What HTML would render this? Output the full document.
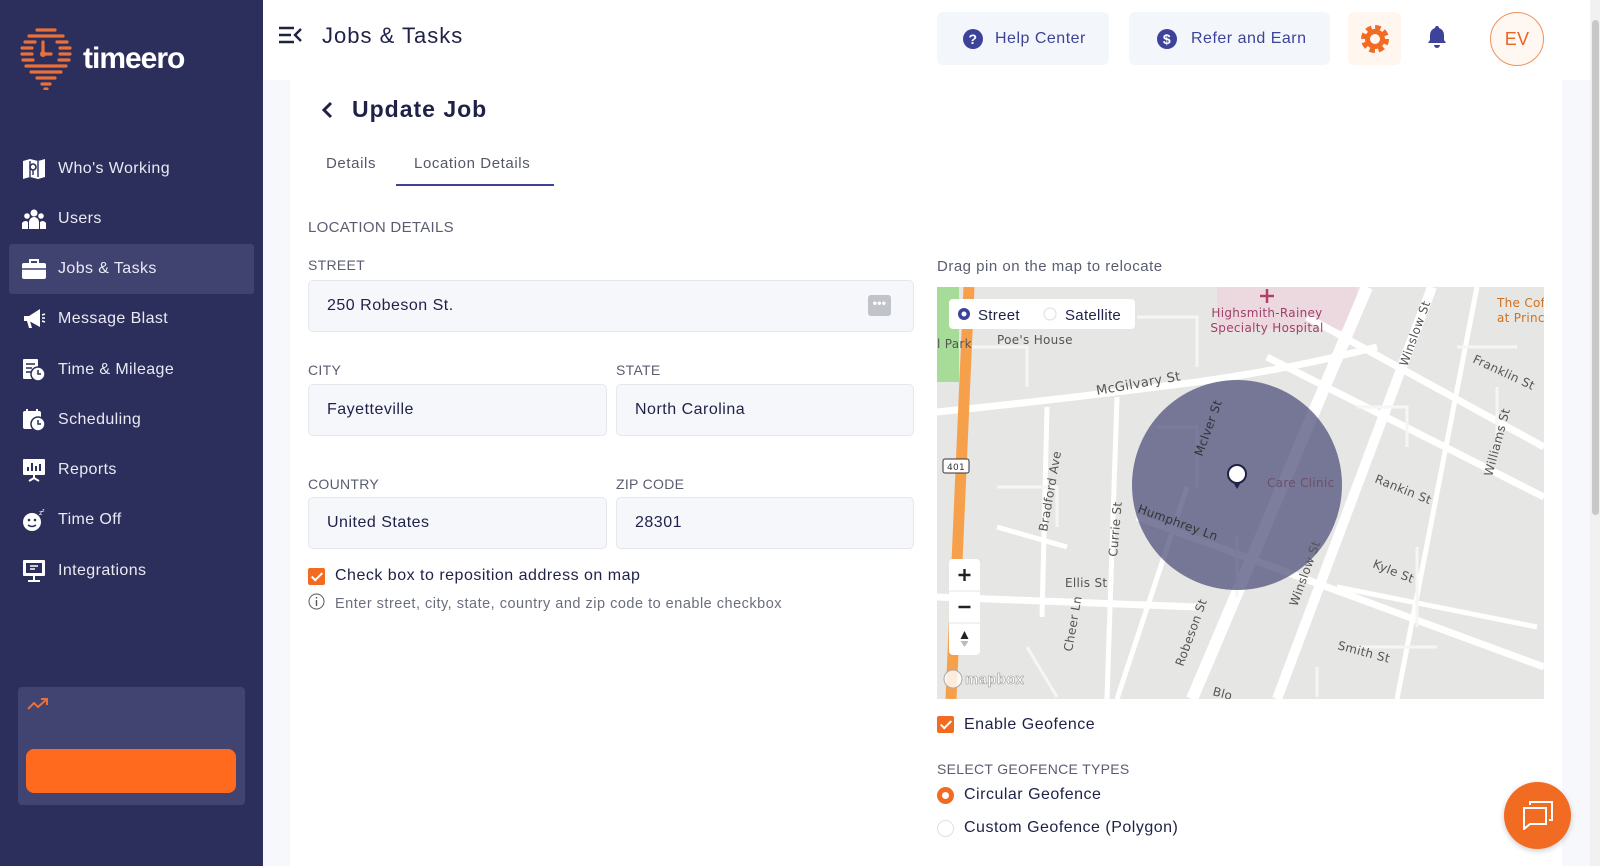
<!DOCTYPE html>
<html><head><meta charset="utf-8"><style>
*{box-sizing:border-box;margin:0;padding:0}
body{width:1600px;height:866px;overflow:hidden;background:#f7f8fb;font-family:"Liberation Sans",sans-serif;color:#1f2147;position:relative;letter-spacing:.3px}
.abs{position:absolute}
.sb{left:0;top:0;width:263px;height:866px;background:#2c2e5b}
.nav{position:absolute;left:9px;width:245px;height:50px;display:flex;align-items:center;color:#e9eaf3;font-size:16px;letter-spacing:.4px}
.nav svg{position:absolute;left:13px}
.nav span{position:absolute;left:49px}
.nav.act{background:#40426f;border-radius:3px}
.card{left:290px;top:80px;width:1272px;height:786px;background:#fff}
.hdr{left:263px;top:0;width:1327px;height:80px;background:#fff}
.lbl{font-size:14px;color:#5a5d70;letter-spacing:.3px}
.inp{position:absolute;height:52px;background:#f5f7fb;border:1px solid #e4e7ee;border-radius:5px;font-size:16px;color:#1f2147;padding-left:18px;display:flex;align-items:center;letter-spacing:.5px}
.btn{position:absolute;background:#f3f6fa;border-radius:6px;display:flex;align-items:center;font-size:16px;color:#3d4399;letter-spacing:.5px}
.cb{position:absolute;width:17px;height:17px;background:#f26b23;border-radius:2px}
.cb:after{content:"";position:absolute;left:6px;top:2px;width:4px;height:9px;border:solid #fff;border-width:0 2px 2px 0;transform:rotate(45deg)}
</style></head><body>
<div class="abs sb"></div>
<svg class="abs" style="left:19px;top:28px" width="54" height="62" viewBox="0 0 54 62">
<g stroke="#e8703a" stroke-width="3.2" stroke-linecap="round">
<line x1="18" y1="2" x2="36" y2="2"/><line x1="10" y1="8" x2="44" y2="8"/><line x1="6" y1="14" x2="16" y2="14"/><line x1="38" y1="14" x2="48" y2="14"/>
<line x1="3" y1="20" x2="13" y2="20"/><line x1="41" y1="20" x2="51" y2="20"/><line x1="3" y1="26" x2="13" y2="26"/><line x1="41" y1="26" x2="51" y2="26"/>
<line x1="4" y1="32" x2="14" y2="32"/><line x1="40" y1="32" x2="50" y2="32"/><line x1="7" y1="38" x2="47" y2="38"/><line x1="12" y1="44" x2="42" y2="44"/>
<line x1="18" y1="50" x2="36" y2="50"/><line x1="23" y1="56" x2="31" y2="56"/><line x1="26" y1="61" x2="28" y2="61"/>
<line x1="24" y1="14" x2="24" y2="26"/><line x1="24" y1="26" x2="32" y2="26"/></g><circle cx="24" cy="26" r="3" fill="#e8703a"/></svg>
<div class="abs" style="left:83px;top:42px;font-size:30px;font-weight:bold;color:#fff;letter-spacing:-1px">timeero</div>

<div class="nav" style="top:144px"><svg width="24" height="22" viewBox="0 0 24 22"><path d="M1 3l7-2 8 2 7-2v18l-7 2-8-2-7 2z" fill="#fff"/><circle cx="11" cy="9" r="3" fill="none" stroke="#2c2e5b" stroke-width="1.6"/><path d="M11 12v5M8 3v16M16 3v16" stroke="#2c2e5b" stroke-width="1.4"/></svg><span>Who's Working</span></div>
<div class="nav" style="top:194px"><svg width="24" height="20" viewBox="0 0 24 20"><circle cx="12" cy="4" r="3.5" fill="#fff"/><circle cx="5" cy="7" r="2.8" fill="#fff"/><circle cx="19" cy="7" r="2.8" fill="#fff"/><path d="M7 20v-7a5 5 0 0110 0v7zM0 20v-6a4 4 0 016-1v7zM24 20v-6a4 4 0 00-6-1v7z" fill="#fff"/></svg><span>Users</span></div>
<div class="nav act" style="top:244px"><svg width="24" height="20" viewBox="0 0 24 20"><path d="M8 4V1h8v3" fill="none" stroke="#fff" stroke-width="2"/><rect x="0" y="4" width="24" height="16" rx="2" fill="#fff"/><path d="M0 10h24" stroke="#40426f" stroke-width="1.5"/></svg><span>Jobs &amp; Tasks</span></div>
<div class="nav" style="top:294px"><svg width="24" height="22" viewBox="0 0 24 22"><path d="M2 8h5l11-7v18L7 13H2z" fill="#fff"/><path d="M5 13l2 7h3l-2-7" fill="#fff"/><path d="M20 7l3-1M20 10h3M20 13l3 1" stroke="#fff" stroke-width="1.5"/></svg><span>Message Blast</span></div>
<div class="nav" style="top:345px"><svg width="24" height="24" viewBox="0 0 24 24"><rect x="1" y="1" width="15" height="20" rx="1" fill="#fff"/><path d="M4 6h9M4 10h6M4 14h5" stroke="#2c2e5b" stroke-width="1.5"/><circle cx="16" cy="16" r="7" fill="#fff" stroke="#2c2e5b" stroke-width="1.5"/><path d="M16 12v4h3" stroke="#2c2e5b" stroke-width="1.5" fill="none"/></svg><span>Time &amp; Mileage</span></div>
<div class="nav" style="top:395px"><svg width="24" height="24" viewBox="0 0 24 24"><rect x="1" y="3" width="18" height="18" rx="2" fill="#fff"/><path d="M5 1v4M15 1v4" stroke="#fff" stroke-width="2"/><circle cx="16" cy="16" r="7" fill="#fff" stroke="#2c2e5b" stroke-width="1.5"/><path d="M16 12v4h3" stroke="#2c2e5b" stroke-width="1.5" fill="none"/></svg><span>Scheduling</span></div>
<div class="nav" style="top:445px"><svg width="24" height="24" viewBox="0 0 24 24"><rect x="1" y="1" width="22" height="16" rx="1" fill="#fff"/><path d="M6 13V9M10 13V5M14 13V8M18 13V6" stroke="#2c2e5b" stroke-width="2"/><path d="M12 17v4M7 23l5-3 5 3" stroke="#fff" stroke-width="2" fill="none"/></svg><span>Reports</span></div>
<div class="nav" style="top:495px"><svg width="24" height="24" viewBox="0 0 24 24"><circle cx="10" cy="14" r="9" fill="#fff"/><circle cx="7" cy="12" r="1.3" fill="#2c2e5b"/><circle cx="13" cy="12" r="1.3" fill="#2c2e5b"/><path d="M6 17q4 3 8 0" stroke="#2c2e5b" stroke-width="1.5" fill="none"/><text x="17" y="7" font-size="7" fill="#fff" font-family="Liberation Sans">z</text><text x="20" y="4" font-size="5" fill="#fff" font-family="Liberation Sans">z</text></svg><span>Time Off</span></div>
<div class="nav" style="top:546px"><svg width="24" height="24" viewBox="0 0 24 24"><rect x="1" y="1" width="22" height="16" rx="1" fill="#fff"/><rect x="4" y="4" width="16" height="10" fill="#2c2e5b"/><path d="M8 7h8M8 10h5" stroke="#fff" stroke-width="1.5"/><path d="M12 17v4M6 22h12" stroke="#fff" stroke-width="2"/></svg><span>Integrations</span></div>

<div class="abs" style="left:18px;top:687px;width:227px;height:118px;background:#414370;border-radius:4px"></div>
<svg class="abs" style="left:27px;top:697px" width="24" height="14" viewBox="0 0 24 14"><path d="M1 12l6-6 4 4 9-8M14 2h6v6" stroke="#e8703a" stroke-width="2" fill="none"/></svg>
<div class="abs" style="left:26px;top:749px;width:210px;height:44px;background:#ff6a1f;border-radius:8px"></div>

<div class="abs hdr"></div>
<div class="abs card"></div>
<div class="abs" style="left:1590px;top:0;width:10px;height:866px;background:#f1f1f1"></div>
<div class="abs" style="left:1592px;top:20px;width:7px;height:495px;background:#c8c8c8;border-radius:4px"></div>

<svg class="abs" style="left:278px;top:26px" width="24" height="18" viewBox="0 0 24 18"><path d="M1 2h15M1 9h12M1 16h15M23 3l-6 6 6 6" stroke="#1f2147" stroke-width="2.4" fill="none"/></svg>
<div class="abs" style="left:322px;top:23px;font-size:22px;color:#1f2147;letter-spacing:1px">Jobs &amp; Tasks</div>

<div class="btn" style="left:937px;top:12px;width:172px;height:53px"><svg style="margin-left:26px" width="20" height="20" viewBox="0 0 20 20"><circle cx="10" cy="10" r="10" fill="#3d4399"/><text x="10" y="15" font-size="14" font-weight="bold" text-anchor="middle" fill="#fff" font-family="Liberation Sans">?</text></svg><span style="margin-left:12px">Help Center</span></div>
<div class="btn" style="left:1129px;top:12px;width:201px;height:53px"><svg style="margin-left:28px" width="20" height="20" viewBox="0 0 20 20"><circle cx="10" cy="10" r="10" fill="#3d4399"/><text x="10" y="15" font-size="14" font-weight="bold" text-anchor="middle" fill="#fff" font-family="Liberation Sans">$</text></svg><span style="margin-left:14px">Refer and Earn</span></div>
<div class="btn" style="left:1348px;top:12px;width:53px;height:53px;background:#fff6ef;justify-content:center"><svg width="28" height="28" viewBox="0 0 28 28"><circle cx="14" cy="14" r="11" fill="none" stroke="#f26b23" stroke-width="6" stroke-dasharray="5.2 3.4"/><circle cx="14" cy="14" r="7.5" fill="none" stroke="#f26b23" stroke-width="5"/></svg></div>
<svg class="abs" style="left:1427px;top:25px" width="20" height="23" viewBox="0 0 20 23"><path d="M10 1a2 2 0 012 2 7 7 0 015 7v5l2 3H1l2-3v-5a7 7 0 015-7 2 2 0 012-2z" fill="#3d4399"/><path d="M7 20a3 3 0 006 0z" fill="#3d4399"/></svg>
<div class="abs" style="left:1490px;top:12px;width:54px;height:54px;border:1.5px solid #f0925a;border-radius:50%;background:#fff7f2;color:#e8652a;font-size:18px;display:flex;align-items:center;justify-content:center">EV</div>

<svg class="abs" style="left:320px;top:101px" width="14" height="18" viewBox="0 0 14 18"><path d="M11 2L4 9l7 7" stroke="#1f2147" stroke-width="3" fill="none"/></svg>
<div class="abs" style="left:352px;top:96px;font-size:23px;font-weight:bold;color:#1f2147;letter-spacing:1px">Update Job</div>
<div class="abs" style="left:326px;top:155px;font-size:15px;color:#555868;letter-spacing:.6px">Details</div>
<div class="abs" style="left:414px;top:155px;font-size:15px;color:#555868;letter-spacing:.6px">Location Details</div>
<div class="abs" style="left:396px;top:184px;width:158px;height:2px;background:#3d4399"></div>

<div class="abs lbl" style="left:308px;top:219px;font-size:15px">LOCATION DETAILS</div>
<div class="abs lbl" style="left:308px;top:257px">STREET</div>
<div class="inp" style="left:308px;top:280px;width:606px">250 Robeson St.</div>
<div class="abs" style="left:868px;top:295px;width:23px;height:21px;background:#c0c3ca;border-radius:3px;color:#fff;font-size:12px;text-align:center;line-height:17px;font-weight:bold">•••</div>
<div class="abs lbl" style="left:308px;top:362px">CITY</div>
<div class="abs lbl" style="left:616px;top:362px">STATE</div>
<div class="inp" style="left:308px;top:384px;width:299px">Fayetteville</div>
<div class="inp" style="left:616px;top:384px;width:298px">North Carolina</div>
<div class="abs lbl" style="left:308px;top:476px">COUNTRY</div>
<div class="abs lbl" style="left:616px;top:476px">ZIP CODE</div>
<div class="inp" style="left:308px;top:497px;width:299px">United States</div>
<div class="inp" style="left:616px;top:497px;width:298px">28301</div>
<div class="cb" style="left:308px;top:568px"></div>
<div class="abs" style="left:335px;top:567px;font-size:16px;letter-spacing:.5px">Check box to reposition address on map</div>
<svg class="abs" style="left:308px;top:593px" width="17" height="17" viewBox="0 0 17 17"><circle cx="8.5" cy="8.5" r="7.5" fill="none" stroke="#555" stroke-width="1"/><path d="M8.5 7v6M8.5 4v1.5" stroke="#555" stroke-width="1.4"/></svg>
<div class="abs" style="left:335px;top:596px;font-size:14.5px;color:#6b6e7e;letter-spacing:.5px">Enter street, city, state, country and zip code to enable checkbox</div>

<div class="abs" style="left:937px;top:258px;font-size:15px;color:#5a5d70;letter-spacing:.5px">Drag pin on the map to relocate</div>
<svg class="abs" style="left:937px;top:287px" width="607" height="412" viewBox="0 0 607 412" font-family="DejaVu Sans, sans-serif">
<rect width="607" height="412" fill="#e6e6e4"/>
<rect x="0" y="0" width="22" height="95" fill="#a7dc98"/>
<rect x="280" y="0" width="140" height="42" fill="#ecd9df"/>
<g stroke="#fff" fill="none" stroke-width="7">
<path d="M0 125 C100 115 180 105 260 95 C330 85 380 75 440 60"/>
<path d="M430 0 L255 412" stroke-width="12"/>
<path d="M495 0 L340 412" stroke-width="10"/>
<path d="M370 30 L607 160"/>
<path d="M330 70 L607 210"/>
<path d="M200 230 L607 380"/>
<path d="M0 310 L260 320"/>
<path d="M110 120 L105 330" stroke-width="5"/>
<path d="M180 110 L170 412" stroke-width="5"/>
<path d="M540 0 L460 412" stroke-width="5"/>
<path d="M250 200 L180 412" stroke-width="5"/>
<path d="M400 300 L600 340" stroke-width="5"/>
<path d="M60 240 L130 260" stroke-width="5"/>
</g>
<g stroke="#f6f6f5" fill="none" stroke-width="3">
<path d="M200 30h60v50M220 140h40v60M60 200h60v40M300 250v60M420 120h50v40M520 60h60M560 100v60M480 260v80M420 360h80M90 360l30 50M380 380v30M30 60h60v40"/>
</g>
<path d="M32 0 L14 412" stroke="#f6a04b" stroke-width="11"/>
<circle cx="300" cy="198" r="105" fill="#4b4c78" fill-opacity=".72"/>
<rect x="6" y="172" width="26" height="14" rx="2" fill="#fff" stroke="#333"/><text x="19" y="183" font-size="9" text-anchor="middle" fill="#333">401</text>
<g font-size="12" fill="#555">
<text x="160" y="108" transform="rotate(-10 160 108)" font-size="13">McGilvary St</text>
<text x="60" y="57">Poe's House</text><text x="0" y="61">l Park</text>
<text x="110" y="245" transform="rotate(-80 110 245)">Bradford Ave</text>
<text x="180" y="270" transform="rotate(-85 180 270)">Currie St</text>
<text x="128" y="300">Ellis St</text>
<text x="135" y="365" transform="rotate(-80 135 365)">Cheer Ln</text>
<text x="246" y="380" transform="rotate(-70 246 380)">Robeson St</text>
<text x="360" y="320" transform="rotate(-70 360 320)">Winslow St</text>
<text x="470" y="80" transform="rotate(-70 470 80)">Winslow St</text>
<text x="535" y="75" transform="rotate(25 535 75)">Franklin St</text>
<text x="437" y="195" transform="rotate(22 437 195)">Rankin St</text>
<text x="435" y="280" transform="rotate(22 435 280)">Kyle St</text>
<text x="400" y="362" transform="rotate(15 400 362)">Smith St</text>
<text x="555" y="190" transform="rotate(-75 555 190)">Williams St</text>
<text x="200" y="225" transform="rotate(20 200 225)" fill="#333">Humphrey Ln</text>
<text x="265" y="170" transform="rotate(-70 265 170)" fill="#333">McIver St</text>
<text x="275" y="408" transform="rotate(15 275 408)">Blo</text>
<text x="330" y="200" fill="#6b4f6a">Care Clinic</text>
</g>
<text x="330" y="30" font-size="12" fill="#a0406a" text-anchor="middle">Highsmith-Rainey</text>
<text x="330" y="45" font-size="12" fill="#a0406a" text-anchor="middle">Specialty Hospital</text>
<path d="M330 2v14M323 9h14" stroke="#b0406a" stroke-width="2.5"/>
<text x="560" y="20" font-size="12" fill="#d0701e">The Coff</text><text x="560" y="35" font-size="12" fill="#d0701e">at Prince</text>
<circle cx="300" cy="187" r="9" fill="#fff" stroke="#1f2147" stroke-width="2"/>
<path d="M296 195 L300 202 L304 195z" fill="#1f2147"/>
<rect x="12" y="12" width="186" height="30" rx="4" fill="#fff"/>
<circle cx="27" cy="27" r="6" fill="#3d4399"/><circle cx="27" cy="27" r="2.5" fill="#fff"/>
<text x="41" y="33" font-size="15" fill="#1f2147" font-family="Liberation Sans">Street</text>
<circle cx="113" cy="27" r="6" fill="none" stroke="#ddd"/>
<text x="128" y="33" font-size="15" fill="#1f2147" font-family="Liberation Sans">Satellite</text>
<rect x="12" y="272" width="31" height="96" rx="4" fill="#fff"/>
<path d="M12 304h31M12 336h31" stroke="#e4e4e4"/>
<path d="M27.5 282v12M21.5 288h12M21.5 320h12" stroke="#222" stroke-width="2.4"/>
<path d="M27.5 344l-4 8h8z" fill="#222"/><path d="M27.5 360l-4-6h8z" fill="#bbb"/>
<circle cx="16" cy="392" r="9" fill="#fff" fill-opacity=".8" stroke="#aaa"/>
<text x="28" y="397" font-size="15" font-weight="bold" fill="#fff" stroke="#999" stroke-width=".6" font-family="Liberation Sans">mapbox</text>
</svg>

<div class="cb" style="left:937px;top:716px"></div>
<div class="abs" style="left:964px;top:716px;font-size:16px;letter-spacing:.5px">Enable Geofence</div>
<div class="abs lbl" style="left:937px;top:761px">SELECT GEOFENCE TYPES</div>
<div class="abs" style="left:937px;top:787px;width:17px;height:17px;border-radius:50%;background:#f26b23"><div style="margin:5px;width:7px;height:7px;border-radius:50%;background:#fff"></div></div>
<div class="abs" style="left:964px;top:786px;font-size:16px;letter-spacing:.5px">Circular Geofence</div>
<div class="abs" style="left:937px;top:820px;width:17px;height:17px;border-radius:50%;border:1.5px solid #dde0e6"></div>
<div class="abs" style="left:964px;top:819px;font-size:16px;letter-spacing:.5px">Custom Geofence (Polygon)</div>
<div class="abs" style="left:1504px;top:782px;width:67px;height:67px;border-radius:50%;background:#f26b23;box-shadow:0 2px 6px rgba(0,0,0,.2)"></div>
<svg class="abs" style="left:1522px;top:800px" width="32" height="30" viewBox="0 0 32 30"><path d="M8 5V2h22v18h-3" stroke="#fff" stroke-width="2" fill="none"/><path d="M2 8h22v16H8l-6 5z" stroke="#fff" stroke-width="2" fill="none"/></svg>
</body></html>
